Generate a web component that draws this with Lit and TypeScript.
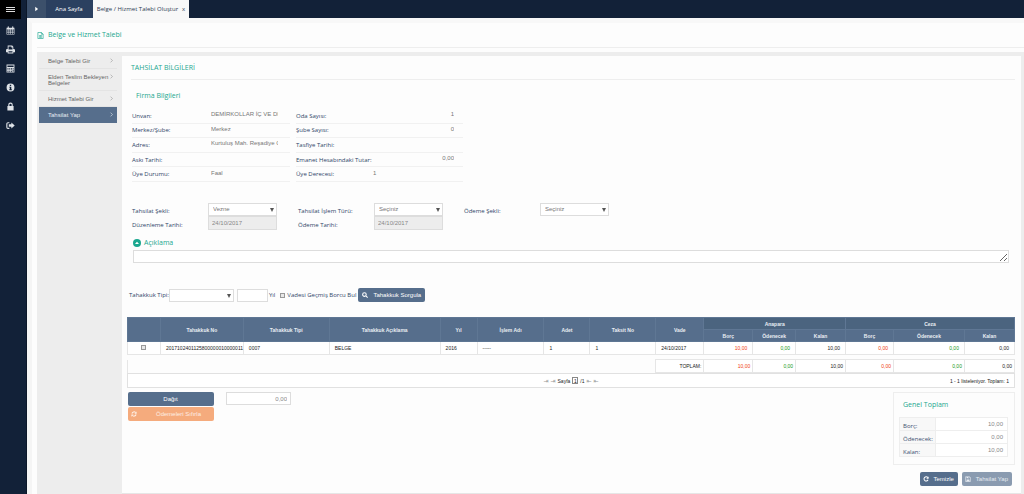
import { LitElement, html, css, svg } from "lit";
import { customElement, property } from "lit/decorators.js";
import { classMap } from "lit/directives/class-map.js";

const icons: Record<string, unknown> = {
  calendar: svg`<path fill-rule="evenodd" d="M1 3h2V1.500a1 1 0 0 1 2 0V3h6V1.500a1 1 0 0 1 2 0V3h2v12H1zM2 6.200v2.200h2.600V6.200zm3.600 0v2.200h2.200V6.200zm3.200 0v2.200H11V6.200zm3.200 0v2.200h2V6.200zM2 9.300v2h2.600v-2zm3.600 0v2h2.200v-2zm3.200 0v2H11v-2zm3.200 0v2h2v-2zM2 12.200V14h2.600v-1.800zm3.600 0V14h2.200v-1.800zm3.200 0V14H11v-1.800zm3.200 0V14h2v-1.800z"/>`,
  print: svg`<path fill-rule="evenodd" d="M3 1h8l2 2v4h1a2 2 0 0 1 2 2v4h-3v2H3v-2H0V9a2 2 0 0 1 2-2h1zm1.500 1.500V8h7V4.500h-2v-2zM4.500 11v2.500h7V11z"/>`,
  calculator: svg`<path fill-rule="evenodd" d="M1 1h14v14H1zm1.500 1.500v3h11v-3zm0 4.500v1.600h2V7zm3.200 0v1.600h2V7zm3.200 0v1.600h2V7zm3.100 0v1.600h1.500V7zM2.500 9.800v1.500h2V9.800zm3.200 0v1.500h2V9.800zm3.200 0v1.500h2V9.800zm-6.400 2.600v1.400h2v-1.400zm3.200 0v1.400h2v-1.400zm3.200 0v1.400h2v-1.400zM12 9.800v4h1.500v-4z"/>`,
  info: svg`<path fill-rule="evenodd" d="M8 1a7 7 0 1 1 0 14A7 7 0 0 1 8 1zM6.800 3v2.200h2.400V3zM5.800 6.500V8h1v3.300h-1v1.500h4.600v-1.500h-1V6.500z"/>`,
  lock: svg`<path fill-rule="evenodd" d="M4 7V5a4 4 0 0 1 8 0v2h1.500v8h-11V7zm2 0h4V5a2 2 0 0 0-4 0z"/>`,
  logout: svg`<path d="M6 2v2H3.500Q2.500 4 2.500 5v6q0 1 1 1H6v2H3.500Q.5 14 .5 11V5q0-3 3-3z"/><path d="M9.500 2.500 15.500 8l-6 5.500V10.300H5V5.700h4.500z"/>`,
  doc: svg`<path fill="none" stroke="currentColor" stroke-width="1.500" d="M2 1h8l4 4v10H2zM10 1v4h4M5 8h6M5 10.500h6M5 13h6"/>`,
  search: svg`<path fill="none" stroke="currentColor" stroke-width="2.800" d="M10.500 10.500 15 15M6.500 2a4.800 4.800 0 1 1 0 9.600 4.800 4.800 0 0 1 0-9.600z"/>`,
  refresh: svg`<path fill="none" stroke="currentColor" stroke-width="2.800" d="M13 4.500A5.600 5.600 0 1 0 13.400 10"/><path d="M15 1v6.500H8.500z"/>`,
  cycle: svg`<path fill="none" stroke="currentColor" stroke-width="2.800" d="M2.600 7A5.500 5.500 0 0 1 12.500 4.500M13.400 9A5.500 5.500 0 0 1 3.500 11.500"/><path d="M15 1v6H9zM1 15V9h6z"/>`,
  save: svg`<path fill-rule="evenodd" d="M1 1h11l3 3v11H1zm1.500 1.500v11h11V5l-2.300-2.500H11V6H4V2.500zM8 3v2h2V3zM4 9h8v4H4z"/>`,
  collapse: svg`<circle cx="8" cy="8" r="8"/><path d="M4 10 8 5.500 12 10z" fill="#fff"/>`,
  play: svg`<path d="M4 1v14l9-7z"/>`,
  chevron: svg`<path fill="none" stroke="currentColor" stroke-width="2" d="m5 2 6 6-6 6"/>`,
};
const icon = (name: string) =>
  html`<svg class="icon" viewBox="0 0 16 16" fill="currentColor" aria-hidden="true">${icons[name]}</svg>`;

const shared = css`
  :host { display: block; }
  * { box-sizing: border-box; }
  button, input, select, textarea { font: inherit; color: inherit; margin: 0; padding: 0; border: 0; border-radius: 0; background: none; }
  a { color: inherit; text-decoration: none; }
  h1, h2, h3 { margin: 0; font-weight: 400; color: #1ba78f; }
  .icon { display: block; flex: none; width: 8px; height: 8px; }
`;

@customElement("app-rail")
class AppRail extends LitElement {
  static styles = [shared, css`
    :host { background: #122138; color: #dfe3e8; width: 27px; border-right: 1px solid #0c1729; }
    .menu { display: grid; place-content: center; gap: 1px; width: 21px; height: 19px; background: #000; }
    .bar { width: 9px; height: 1px; background: #ddd; }
    .links { display: grid; gap: 10px; padding: 7px 0; width: 21px; justify-items: center; }
    .links .icon { width: 9px; height: 9px; }
    .link { display: block; }
  `];
  render() {
    const items = [["calendar", "Takvim"], ["print", "Yazdır"], ["calculator", "Hesap"], ["info", "Bilgi"], ["lock", "Kilit"], ["logout", "Çıkış"]];
    return html`
      <button class="menu" aria-label="Menü"><span class="bar"></span><span class="bar"></span><span class="bar"></span></button>
      <nav class="links">${items.map(([i, t]) => html`<a class="link" href="#" aria-label=${t}>${icon(i)}</a>`)}</nav>`;
  }
}

@customElement("app-tabs")
class AppTabs extends LitElement {
  static styles = [shared, css`
    :host { display: flex; height: 18px; background: #122138; color: #fff; font: 6px/18px "Open Sans", sans-serif; }
    .toggle { width: 19px; background: #3c506b; display: grid; place-items: center; }
    .toggle .icon { width: 5px; height: 6px; }
    .tab { width: 47px; padding-right: 1px; text-align: center; background: #2b4060; }
    .current { background: #f8f8f8; color: #2c3a52; width: 96px; display: flex; justify-content: center; gap: 4px; }
  `];
  render() {
    return html`
      <button class="toggle" aria-label="Sekmeler">${icon("play")}</button>
      <a class="tab" href="#">Ana Sayfa</a>
      <div class="current"><a href="#">Belge / Hizmet Talebi Oluştur</a><button aria-label="Kapat">x</button></div>`;
  }
}

@customElement("side-menu")
class SideMenu extends LitElement {
  static styles = [shared, css`
    :host { width: 81px; flex: none; padding: 1px 1px 0 2px; background: #ededed; color: #666; font: 6px/6px "Liberation Sans", sans-serif; }
    .item { display: flex; justify-content: space-between; padding: 5px 3px 4px 9px; border-bottom: 1px solid #e4e4e4; }
    .label { max-width: 61px; }
    .wide { white-space: pre-line; }
    .item .icon { width: 5px; height: 5px; color: #999; }
    .active, .active .icon { color: #e6ebf1; }
    .active { background: #566e8c; border-color: #566e8c; }
  `];
  render() {
    const items = ["Belge Talebi Gir", "Elden Teslim Bekleyen\nBelgeler", "Hizmet Talebi Gir", "Tahsilat Yap"];
    return html`<nav>${items.map((t, i) => html`
      <a href="#" class=${classMap({ item: true, active: i === 3 })}><span class=${i === 1 ? "wide" : "label"}>${t}</span>${icon("chevron")}</a>`)}</nav>`;
  }
}

@customElement("company-info")
class CompanyInfo extends LitElement {
  static styles = [shared, css`
    :host { padding: 8px 10px 0; }
    .grid { display: grid; grid-template-columns: 158px 167px; column-gap: 6px; }
    .col { display: grid; grid-auto-rows: 1fr; height: 73px; }
    .row { display: grid; align-items: center; border-bottom: 1px solid #f1f1f1; }
    .left { grid-template-columns: 79px 67px; }
    .right { grid-template-columns: 77px 81px; }
    .value { width: 100%; min-width: 0; height: 10px; margin-bottom: 3px; font: 6px/10px "Liberation Sans", sans-serif; color: #777; }
    .num { text-align: right; }
  `];
  render() {
    const left = [["Unvan:", "DEMİRKOLLAR İÇ VE DIŞ"], ["Merkez/Şube:", "Merkez"], ["Adres:", "Kurtuluş Mah. Reşadiye Ca"], ["Askı Tarihi:", ""], ["Üye Durumu:", "Faal"]];
    const right = [["Oda Sayısı:", "1"], ["Şube Sayısı:", "0"], ["Tasfiye Tarihi:", ""], ["Emanet Hesabındaki Tutar:", "0,00"], ["Üye Derecesi:", "1"]];
    const col = (rows: string[][], side: string) => html`<div class="col">${rows.map(([l, v], i) => html`
      <div class="row ${side}"><label for="${side}${i}">${l}</label>
      <input id="${side}${i}" readonly .value=${v} class=${classMap({ value: true, num: side === "right" && i < 4 })}></div>`)}</div>`;
    return html`<div class="grid">${col(left, "left")}${col(right, "right")}</div>`;
  }
}

@customElement("drop-down")
class DropDown extends LitElement {
  @property() value = "";
  @property() label = "";
  static styles = [shared, css`
    :host { position: relative; }
    .select { appearance: none; width: 100%; height: 13px; border: 1px solid #ddd; background: #fff; padding: 0 4px; font: 6px/11px "Liberation Sans", sans-serif; color: #777; display: block; }
    .arrow { position: absolute; right: 3px; top: 5px; border: 2px solid transparent; border-top: 4px solid #555; border-bottom: 0; pointer-events: none; }
  `];
  render() {
    return html`<select class="select" aria-label=${this.label}><option>${this.value}</option></select><span class="arrow"></span>`;
  }
}

@customElement("payment-form")
class PaymentForm extends LitElement {
  static styles = [shared, css`
    .fields { display: grid; grid-template-columns: 76px 69px 21px 76px 69px 21px 76px 69px; padding: 21px 10px 0; align-items: center; }
    .c1 { grid-column: 1; } .c2 { grid-column: 4; } .c3 { grid-column: 7; }
    .name { padding-top: 3px; }
    .date { width: 100%; height: 14px; border: 1px solid #ddd; background: #ededed; padding: 0 3px; font: 6px/12px "Liberation Sans", sans-serif; color: #888; }
    .head { display: flex; align-items: center; gap: 3px; padding: 8px 11px 2px; }
    .head .icon { color: #1ba78f; }
    h3 { font-size: 7px; line-height: 10px; }
    .note { display: block; width: calc(100% - 23px); height: 13px; margin-left: 11px; border: 1px solid #ddd; background: #fff; resize: both; overflow: auto; }
    .query { display: flex; align-items: center; padding: 25px 7px 0; }
    .type { width: 65px; margin-right: 3px; }
    .year { width: 31px; height: 13px; border: 1px solid #ddd; background: #fff; margin-right: 1px; }
    .tick { width: 5px; height: 5px; margin: 0 2px 0 5px; appearance: none; border: 1px solid #999; background: #e8e8e8; }
    .go { display: flex; align-items: center; gap: 5px; height: 14px; padding: 0 4px; margin-left: 2px; border-radius: 2px; background: #566e8c; color: #fff; font: 6px/14px "Liberation Sans", sans-serif; }
    .go .icon { width: 6px; height: 6px; }
  `];
  render() {
    return html`
      <div class="fields">
        <span class="name c1">Tahsilat Şekli:</span><drop-down label="Tahsilat Şekli" value="Vezne"></drop-down>
        <span class="name c2">Tahsilat İşlem Türü:</span><drop-down label="Tahsilat İşlem Türü" value="Seçiniz"></drop-down>
        <span class="name c3">Ödeme Şekli:</span><drop-down label="Ödeme Şekli" value="Seçiniz"></drop-down>
        <label class="name c1" for="issued">Düzenleme Tarihi:</label><input class="date" id="issued" readonly value="24/10/2017">
        <label class="name c2" for="paid">Ödeme Tarihi:</label><input class="date" id="paid" readonly value="24/10/2017">
      </div>
      <div class="head">${icon("collapse")}<h3>Açıklama</h3></div>
      <textarea class="note" aria-label="Açıklama"></textarea>
      <div class="query">
        <span>Tahakkuk Tipi:</span><drop-down class="type" label="Tahakkuk Tipi"></drop-down>
        <input class="year" id="year"><label for="year">Yıl</label>
        <input class="tick" id="due" type="checkbox"><label for="due">Vadesi Geçmiş Borcu Bul</label>
        <button class="go">${icon("search")}Tahakkuk Sorgula</button>
      </div>`;
  }
}

@customElement("accrual-table")
class AccrualTable extends LitElement {
  static styles = [shared, css`
    :host { margin: 15px 6px 0 5px; font: 5px/6px "Liberation Sans", sans-serif; color: #222; }
    .table { width: 100%; border-collapse: collapse; table-layout: fixed; }
    th { height: 12px; padding: 0; background: #566e8c; color: #e8edf3; border: 1px solid #5f7794; font-weight: 700; }
    .group { background: #4b647f; }
    td { height: 13px; padding: 0 5px; border: 1px solid #e6e6e6; background: #fff; white-space: nowrap; }
    .pick { text-align: center; padding: 0; }
    .tick { appearance: none; display: inline-block; width: 5px; height: 5px; border: 1px solid #999; background: #e8e8e8; }
    .num { text-align: right; }
    .gap td, .total .none { border: 0; background: none; }
    .gap td { height: 5px; line-height: 0; }
    .total td { padding: 0 2px; }
    .total .none { border-left: 1px solid #e6e6e6; }
    .red { color: #f03c14; }
    .green { color: #149a1c; }
    .pager { display: grid; grid-template-columns: 1fr auto 1fr; align-items: center; height: 15px; padding: 0 5px; border: 1px solid #e1e1e1; background: #fff; }
    .pages { grid-column: 2; display: flex; align-items: center; gap: 2px; }
    .nav { color: #999; font: 6px/6px "DejaVu Sans", sans-serif; }
    .page { width: 6px; height: 7px; border: 1px solid #888; text-align: center; }
    .count { text-align: right; }
  `];
  render() {
    const widths = [33, 83, 86, 111, 37, 67, 46, 66, 48, 49, 43, 50, 48, 71, 50];
    const total = widths.reduce((a, b) => a + b, 0);
    const heads = ["", "Tahakkuk No", "Tahakkuk Tipi", "Tahakkuk Açıklama", "Yıl", "İşlem Adı", "Adet", "Taksit No", "Vade"];
    const cells = ["2017102401125800000010000011", "0007", "BELGE", "2016", "-----", "1", "1", "24/10/2017"];
    const sums = ["10,00", "0,00", "10,00", "0,00", "0,00", "0,00"];
    const nums = () => sums.map((v, i) => html`<td class=${classMap({ num: true, red: i % 3 === 0, green: i % 3 === 1 })}>${v}</td>`);
    return html`
      <table class="table">
        <colgroup>${widths.map((w) => html`<col style="width:${(w / total) * 100}%">`)}</colgroup>
        <thead>
          <tr>${heads.map((h) => html`<th rowspan="2">${h}</th>`)}<th class="group" colspan="3">Anapara</th><th class="group" colspan="3">Ceza</th></tr>
          <tr>${["Borç", "Ödenecek", "Kalan", "Borç", "Ödenecek", "Kalan"].map((h) => html`<th>${h}</th>`)}</tr>
        </thead>
        <tbody>
          <tr><td class="pick"><input class="tick" type="checkbox" aria-label="Seç"></td>${cells.map((c) => html`<td>${c}</td>`)}${nums()}</tr>
          <tr class="gap"><td colspan="15"></td></tr>
          <tr class="total"><td class="none" colspan="8"></td><td class="num">TOPLAM:</td>${nums()}</tr>
        </tbody>
      </table>
      <div class="pager">
        <div class="pages"><button class="nav" aria-label="İlk">⇥</button><button class="nav" aria-label="Önceki">⇥</button>
          <label for="page">Sayfa</label><input class="page" id="page" value="1"><span>/1</span>
          <button class="nav" aria-label="Sonraki">⇤</button><button class="nav" aria-label="Son">⇤</button></div>
        <div class="count">1 - 1 listeleniyor. Toplam: 1</div>
      </div>`;
  }
}

@customElement("payment-summary")
class PaymentSummary extends LitElement {
  static styles = [shared, css`
    :host { display: flex; justify-content: space-between; padding: 4px 6px 6px; font: 6px/8px "Liberation Sans", sans-serif; }
    .left { display: grid; grid-template-columns: 86px 65px; column-gap: 12px; row-gap: 1px; align-content: start; }
    .btn { display: flex; align-items: center; justify-content: center; height: 14px; padding: 0 4px 0 3px; border-radius: 2px; background: #566e8c; color: #fff; }
    .btn .icon { width: 6px; height: 6px; margin-right: 5px; }
    .reset { background: #f5ab7d; color: #fdeee4; }
    .reset .label { flex: 1; padding-left: 5px; }
    .muted { background: #8a9bb0; color: #e6ebf1; }
    .amount { height: 13px; border: 1px solid #ddd; background: #fff; padding: 0 3px; text-align: right; color: #888; }
    .right { width: 122px; }
    .box { border: 1px solid #eee; padding: 7px 6px 7px 5px; }
    h3 { font: 7px/10px "Open Sans", sans-serif; padding: 0 4px 7px; }
    .sums { border-collapse: collapse; width: 100%; }
    th, td { height: 13px; padding: 0 4px; border: 1px solid #eee; }
    th { width: 36px; text-align: left; background: #f8f8f8; padding: 3px 0 0 3px; font: 6px/8px "Open Sans", sans-serif; color: #3d5070; }
    td { text-align: right; background: #fff; color: #888; }
    .actions { display: flex; justify-content: flex-end; gap: 4px; padding: 7px 3px 0 0; }
  `];
  render() {
    return html`
      <div class="left">
        <button class="btn">Dağıt</button><input class="amount" aria-label="Tutar" value="0,00">
        <button class="btn reset">${icon("cycle")}<span class="label">Ödemeleri Sıfırla</span></button>
      </div>
      <div class="right">
        <div class="box"><h3>Genel Toplam</h3>
          <table class="sums">${[["Borç:", "10,00"], ["Ödenecek:", "0,00"], ["Kalan:", "10,00"]].map(([l, v]) => html`<tr><th scope="row">${l}</th><td>${v}</td></tr>`)}</table>
        </div>
        <div class="actions"><button class="btn">${icon("refresh")}Temizle</button><button class="btn muted">${icon("save")}Tahsilat Yap</button></div>
      </div>`;
  }
}

@customElement("app-root")
class AppRoot extends LitElement {
  static styles = [shared, css`
    :host { display: flex; min-height: 100vh; background: #fdfdfd; font: 6px/8px "Open Sans", sans-serif; color: #2f4568; }
    .main { flex: 1; min-width: 0; display: flex; flex-direction: column; }
    .page { flex: 1; display: flex; flex-direction: column; border-left: 5px solid #f5f5f5; border-top: 5px solid #f8f8f8; padding-left: 5px; }
    .title { display: flex; align-items: center; gap: 4px; height: 25px; margin-bottom: 4px; border-bottom: 1px solid #eee; }
    .title .icon { width: 7px; height: 7px; color: #1ba78f; }
    h1 { font-size: 7px; line-height: 10px; }
    .body { flex: 1; display: flex; border-right: 3px solid #ededed; background: #ededed; }
    .panel { flex: 1; min-width: 0; margin: 4px 0 0 4px; background: #fdfdfd; border-bottom: 1px solid #e6e6e6; }
    h2 { font-size: 7px; line-height: 10px; padding: 7px 0 6px; margin: 0 6px 0 9px; border-bottom: 1px solid #eee; }
    h3 { font-size: 7px; line-height: 10px; padding: 11px 14px 0; }
  `];
  render() {
    return html`
      <app-rail></app-rail>
      <div class="main">
        <app-tabs></app-tabs>
        <main class="page">
          <div class="title">${icon("doc")}<h1>Belge ve Hizmet Talebi</h1></div>
          <div class="body">
            <side-menu></side-menu>
            <section class="panel">
              <h2>TAHSİLAT BİLGİLERİ</h2>
              <h3>Firma Bilgileri</h3>
              <company-info></company-info>
              <payment-form></payment-form>
              <accrual-table></accrual-table>
              <payment-summary></payment-summary>
            </section>
          </div>
        </main>
      </div>`;
  }
}
